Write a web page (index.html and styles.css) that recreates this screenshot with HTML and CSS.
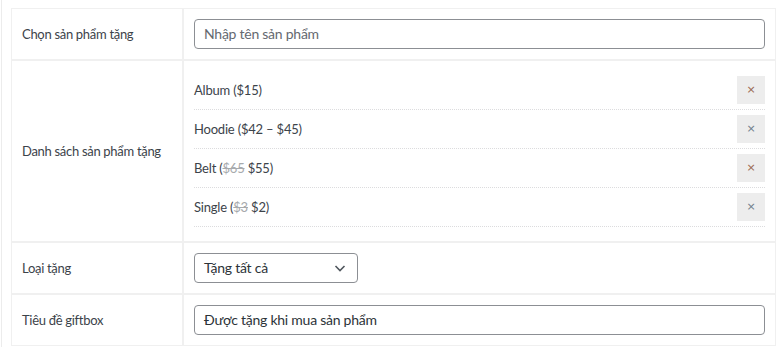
FILE: index.html
```html
<!DOCTYPE html>
<html lang="vi">
<head>
<meta charset="utf-8">
<link rel="stylesheet" href="styles.css">
</head>
<body>
<div class="page">
  <table class="form-table">
    <tr>
      <th class="label">Chọn sản phẩm tặng</th>
      <td class="field"><div class="input placeholder">Nhập tên sản phẩm</div></td>
    </tr>
    <tr class="row-list">
      <th class="label">Danh sách sản phẩm tặng</th>
      <td class="field">
        <ul class="gift-list">
          <li class="gift"><span class="name">Album ($15)</span><button class="remove remove-warm">×</button></li>
          <li class="gift"><span class="name">Hoodie ($42 – $45)</span><button class="remove remove-cool">×</button></li>
          <li class="gift"><span class="name">Belt (<del>$65</del> $55)</span><button class="remove remove-warm">×</button></li>
          <li class="gift"><span class="name">Single (<del>$3</del> $2)</span><button class="remove remove-cool">×</button></li>
        </ul>
      </td>
    </tr>
    <tr>
      <th class="label">Loại tặng</th>
      <td class="field">
        <div class="select"><span>Tặng tất cả</span>
          <svg class="chevron" width="14" height="14" viewBox="0 0 14 14"><path d="M2.5 5 L7 9.5 L11.5 5" fill="none" stroke="#50575e" stroke-width="1.6"/></svg>
        </div>
      </td>
    </tr>
    <tr>
      <th class="label">Tiêu đề giftbox</th>
      <td class="field"><div class="input value">Được tặng khi mua sản phẩm</div></td>
    </tr>
  </table>
</div>
</body>
</html>
```
FILE: styles.css
```css
html, body {
  margin: 0;
  padding: 0;
  background: #fff;
}
body {
  font-family: Lato, "Noto Sans", sans-serif;
  color: #3c434a;
}
.page {
  margin-left: 1px;
  border-left: 1px solid #ececec;
  padding: 8px 0 0 9px;
  height: 347px;
  box-sizing: border-box;
}
.form-table {
  border-collapse: separate;
  border-spacing: 0;
  width: 765px;
  table-layout: fixed;
}
.form-table th,
.form-table td {
  border: 1px solid #f0f0f0;
  padding: 10px;
  vertical-align: middle;
}
.label {
  width: 150px;
  text-align: left;
  font-weight: 400;
  font-size: 13px;
  letter-spacing: -0.3px;
  color: #3c434a;
  height: 30px;
  white-space: nowrap;
}
.input {
  box-sizing: border-box;
  height: 30px;
  border: 1px solid #8c8f94;
  border-radius: 4px;
  padding: 0 9px;
  font-size: 14px;
  letter-spacing: -0.25px;
  line-height: 28px;
  color: #2c3338;
}
.placeholder { color: #646970; }
.select {
  box-sizing: border-box;
  width: 164px;
  height: 30px;
  border: 1px solid #8c8f94;
  border-radius: 4px;
  padding: 0 10px 0 9px;
  font-size: 14px;
  letter-spacing: -0.25px;
  line-height: 28px;
  color: #2c3338;
  display: flex;
  justify-content: space-between;
  align-items: center;
}
.chevron { display: block; }
.gift-list {
  list-style: none;
  margin: 0 0 4px;
  padding: 0;
}
.gift {
  display: flex;
  align-items: center;
  justify-content: space-between;
  padding: 5px 0;
  border-bottom: 1px dotted #dcdcde;
  font-size: 13px;
  letter-spacing: -0.2px;
  color: #3c434a;
}
.gift del { color: #a7aaad; }
.remove {
  width: 28px;
  height: 28px;
  border: 0;
  padding: 0;
  margin: 0;
  background: #ededed;
  font-family: "DejaVu Sans", sans-serif;
  font-size: 11px;
  letter-spacing: 0;
  line-height: 28px;
  cursor: pointer;
}
.remove-warm { color: #9a6a52; }
.remove-cool { color: #6f7f8c; }
```
